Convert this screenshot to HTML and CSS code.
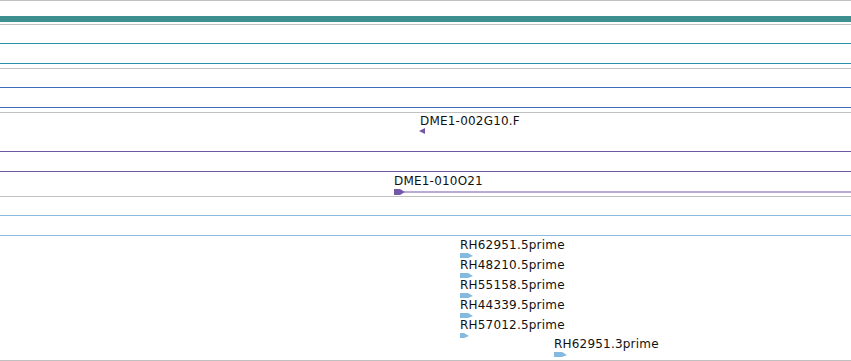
FILE: index.html
```html
<!DOCTYPE html>
<html lang="en">
<head>
  <meta charset="UTF-8" />
  <title>Track viewer</title>
  <meta name="viewport" content="width=device-width, initial-scale=1.0" />
  <link rel="stylesheet" href="styles.css">
</head>
<body>

  <div class="tracks">
    <div class="track track-ruler">
      <div class="ruler-bar"></div>
    </div>

    <div class="track track-short">
      <div class="lane lane-teal"></div>
    </div>

    <div class="track track-short">
      <div class="lane lane-blue"></div>
    </div>

    <div class="track track-dme">
      <div class="lane lane-purple"></div>

      <!-- features sit at their genomic position -->
      <div class="feature" style="left: 419px; top: 2px;">
        <span class="label label-tight">DME1-002G10.F</span>
        <svg width="6" height="6" viewBox="0 0 6 6"><polygon points="0,3 6,0 6,6" fill="#7458a8"/></svg>
      </div>

      <div class="feature" style="left: 394px; top: 61px;">
        <span class="label">DME1-010O21</span>
        <svg width="457" height="6" viewBox="0 0 457 6">
          <polygon points="0,0 6,0 11,3 6,6 0,6" fill="#7458a8"/>
          <rect x="10" y="2.5" width="447" height="1" fill="#7458a8"/>
        </svg>
      </div>
    </div>

    <div class="track track-rh">
      <div class="lane lane-light"></div>

      <div class="feature" style="left: 460px; top: 41px;">
        <span class="label">RH62951.5prime</span>
        <svg class="rh-arrow" width="13" height="5" viewBox="0 0 13 5"><polygon points="0,0 8,0 13,3 8,5 0,5" fill="#86b9df"/></svg>
      </div>
      <div class="feature" style="left: 460px; top: 61px;">
        <span class="label">RH48210.5prime</span>
        <svg class="rh-arrow" width="13" height="5" viewBox="0 0 13 5"><polygon points="0,0 8,0 13,3 8,5 0,5" fill="#86b9df"/></svg>
      </div>
      <div class="feature" style="left: 460px; top: 81px;">
        <span class="label">RH55158.5prime</span>
        <svg class="rh-arrow" width="13" height="5" viewBox="0 0 13 5"><polygon points="0,0 8,0 13,3 8,5 0,5" fill="#86b9df"/></svg>
      </div>
      <div class="feature" style="left: 460px; top: 101px;">
        <span class="label">RH44339.5prime</span>
        <svg class="rh-arrow" width="13" height="5" viewBox="0 0 13 5"><polygon points="0,0 8,0 13,3 8,5 0,5" fill="#86b9df"/></svg>
      </div>
      <div class="feature" style="left: 460px; top: 121px;">
        <span class="label">RH57012.5prime</span>
        <svg class="rh-arrow" width="9" height="5" viewBox="0 0 9 5"><polygon points="0,0 4,0 9,3 4,5 0,5" fill="#86b9df"/></svg>
      </div>
      <div class="feature" style="left: 554px; top: 140px;">
        <span class="label">RH62951.3prime</span>
        <svg class="rh-arrow" width="13" height="5" viewBox="0 0 13 5"><polygon points="0,0 8,0 13,3 8,5 0,5" fill="#86b9df"/></svg>
      </div>
    </div>
  </div>

</body>
</html>
```

FILE: styles.css
```css
body {
  margin: 0;
  background: #fff;
  font-family: 'DejaVu Sans', sans-serif;
  font-size: 12px;
  color: #111;
}

.tracks {
  width: 851px;
  border-bottom: 1px solid #c0c0c0;
}

.track {
  position: relative;
  border-top: 1px solid #c0c0c0;
}

.track-ruler {
  padding: 15px 0 2px;
}

.ruler-bar {
  height: 6px;
  background: #3e8f90;
}

.track-short {
  padding: 18px 0 4px;
}

.lane {
  height: 19px;
  border-top: 1px solid;
  border-bottom: 1px solid;
}

.lane-teal { border-color: #2a8fa9; }
.lane-blue { border-color: #3c6cb8; }
.lane-purple { border-color: #6e56a2; }
.lane-light { border-color: #8cbadc; }

.track-dme {
  height: 84px;
  padding-top: 38px;
  box-sizing: border-box;
}

.track-rh {
  height: 164px;
  padding-top: 18px;
  box-sizing: border-box;
}

.feature {
  position: absolute;
  display: flex;
  flex-direction: column;
  align-items: flex-start;
}

.label {
  line-height: 15px;
  letter-spacing: 0.2px;
  white-space: nowrap;
}

.label-tight {
  line-height: 13px;
  margin-left: 1px;
}

.feature svg {
  display: block;
}
```
